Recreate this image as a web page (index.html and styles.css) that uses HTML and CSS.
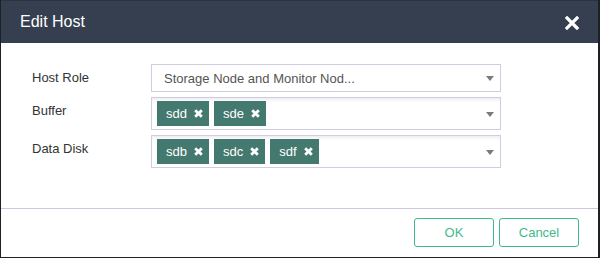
FILE: index.html
```html
<!DOCTYPE html>
<html lang="en">
<head>
  <meta charset="UTF-8" />
  <title>Edit Host</title>
  <link rel="stylesheet" href="styles.css">
</head>
<body>
  <div class="dialog">
    <header class="dialog-header">
      <h1>Edit Host</h1>
      <svg class="close" width="14" height="14" viewBox="0 0 14 14"><path d="M2 2 L12 12 M12 2 L2 12" stroke="#fff" stroke-width="3.2" stroke-linecap="square"/></svg>
    </header>

    <div class="dialog-body">
      <div class="row">
        <label>Host Role</label>
        <div class="select single">
          <span class="value">Storage Node and Monitor Nod...</span>
          <span class="caret"></span>
        </div>
      </div>

      <div class="row">
        <label>Buffer</label>
        <div class="select multi">
          <span class="tag">sdd <svg width="9" height="9" viewBox="0 0 9 9"><path d="M1.2 1.2 L7.8 7.8 M7.8 1.2 L1.2 7.8" stroke="#fff" stroke-width="2.8"/></svg></span>
          <span class="tag">sde <svg width="9" height="9" viewBox="0 0 9 9"><path d="M1.2 1.2 L7.8 7.8 M7.8 1.2 L1.2 7.8" stroke="#fff" stroke-width="2.8"/></svg></span>
          <span class="caret"></span>
        </div>
      </div>

      <div class="row">
        <label>Data Disk</label>
        <div class="select multi">
          <span class="tag">sdb <svg width="9" height="9" viewBox="0 0 9 9"><path d="M1.2 1.2 L7.8 7.8 M7.8 1.2 L1.2 7.8" stroke="#fff" stroke-width="2.8"/></svg></span>
          <span class="tag">sdc <svg width="9" height="9" viewBox="0 0 9 9"><path d="M1.2 1.2 L7.8 7.8 M7.8 1.2 L1.2 7.8" stroke="#fff" stroke-width="2.8"/></svg></span>
          <span class="tag">sdf <svg width="9" height="9" viewBox="0 0 9 9"><path d="M1.2 1.2 L7.8 7.8 M7.8 1.2 L1.2 7.8" stroke="#fff" stroke-width="2.8"/></svg></span>
          <span class="caret"></span>
        </div>
      </div>
    </div>

    <footer class="dialog-footer">
      <button class="btn">OK</button>
      <button class="btn">Cancel</button>
    </footer>
  </div>
</body>
</html>
```

FILE: styles.css
```css
* { margin: 0; padding: 0; box-sizing: border-box; font-family: 'Liberation Sans', Arial, sans-serif; }
html, body { background: #1c2027; }

.dialog {
  width: 600px; height: 258px; background: #fff;
  border-left: 1px solid #1c2027; border-right: 2px solid #1c2027; border-bottom: 1px solid #1c2027;
  display: flex; flex-direction: column;
}

.dialog-header {
  height: 43px; background: #353f50; border-top: 1px solid #2b3341;
  display: flex; justify-content: space-between; align-items: center;
  padding: 0 19px 0 19px; color: #fff;
}
.dialog-header h1 { font-size: 16px; font-weight: normal; }
.close { margin-top: 1px; }

.dialog-body {
  flex: 1; padding: 21px 0 0 31px;
  display: flex; flex-direction: column; gap: 5px;
  border-bottom: 1px solid #cdc9dc;
}
.row { display: flex; align-items: flex-start; }
.row label { width: 119px; font-size: 13px; line-height: 28px; color: #333; }

.select {
  width: 350px; border: 1px solid #d0cde0; position: relative;
  display: flex; align-items: center;
}
.select.single { height: 28px; padding-left: 12px; }
.select.single .value { font-size: 13px; color: #555; }
.select.multi {
  height: 33px; padding: 3px 5px; gap: 5px;
  box-shadow: inset 0 4px 4px -3px #e6e6e6;
}

.tag {
  height: 25px; background: #44796f; color: #fff; font-size: 13px;
  display: flex; align-items: center; gap: 7px; padding: 0 6px 0 9px;
}

.caret {
  position: absolute; right: 6px; top: 50%; margin-top: -2px;
  border-left: 4px solid transparent; border-right: 4px solid transparent;
  border-top: 5px solid #7a7a80;
}

.dialog-footer {
  height: 48px; display: flex; justify-content: flex-end; align-items: flex-start;
  gap: 5px; padding: 9px 19px 0 0;
}
.btn {
  width: 80px; height: 29px; background: #fff; color: #3fba8c;
  border: 1px solid #3fba8c; border-radius: 3px; font-size: 13px;
}
```
